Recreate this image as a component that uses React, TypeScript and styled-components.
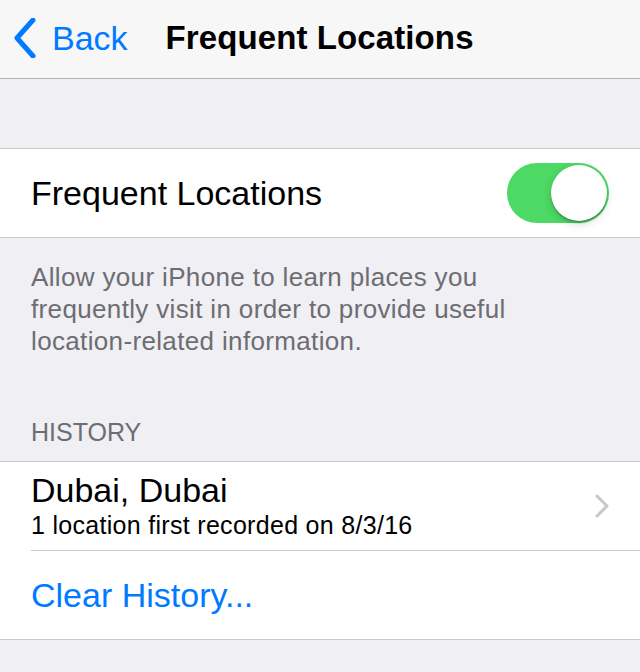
import styled, { createGlobalStyle } from 'styled-components';

const GlobalStyle = createGlobalStyle`
  html, body {
    margin: 0;
    padding: 0;
    background: #efeff4;
    font-family: "Liberation Sans", Arial, sans-serif;
    -webkit-font-smoothing: antialiased;
  }
`;

const Screen = styled.div`
  width: 640px;
  min-height: 672px;
  background: #efeff4;
`;

const NavBar = styled.header`
  height: 78px;
  display: flex;
  align-items: center;
  background: #f7f7f8;
  border-bottom: 1px solid #b2b2b2;
  box-sizing: content-box;
`;

const BackButton = styled.a`
  display: flex;
  align-items: center;
  gap: 16px;
  padding-left: 14px;
  color: #007aff;
  font-size: 34px;
  text-decoration: none;
  margin-bottom: 2px;
`;

const NavTitle = styled.h1`
  margin: 0 0 2px 38px;
  font-size: 33px;
  font-weight: 700;
  color: #000;
  letter-spacing: 0.1px;
`;

const Spacer = styled.div<{ height: number }>`
  height: ${({ height }) => height}px;
`;

const Group = styled.section`
  background: #fff;
  border-top: 1px solid #c8c7cc;
  border-bottom: 1px solid #c8c7cc;
`;

const Cell = styled.div<{ height: number; divider?: boolean }>`
  position: relative;
  height: ${({ height }) => height}px;
  padding: 0 31px;
  display: flex;
  align-items: center;
  justify-content: space-between;

  ${({ divider }) =>
    divider &&
    `
    &::after {
      content: '';
      position: absolute;
      left: 31px;
      right: 0;
      bottom: -1px;
      height: 1px;
      background: #c8c7cc;
      z-index: 1;
    }
    margin-bottom: 1px;
  `}
`;

const CellLabel = styled.span<{ tint?: string }>`
  font-size: 34px;
  color: ${({ tint }) => tint || '#000'};
`;

const CellText = styled.div`
  display: flex;
  flex-direction: column;
`;

const CellTitle = styled.span`
  font-size: 34px;
  line-height: 38px;
  color: #000;
`;

const CellSubtitle = styled.span`
  font-size: 25px;
  line-height: 32px;
  letter-spacing: 0.3px;
  color: #000;
`;

const Switch = styled.div<{ on: boolean }>`
  width: 102px;
  height: 60px;
  border-radius: 30px;
  background: ${({ on }) => (on ? '#4cd964' : '#e5e5ea')};
  display: flex;
  align-items: center;
  justify-content: ${({ on }) => (on ? 'flex-end' : 'flex-start')};
  padding: 2px;
  box-sizing: border-box;
`;

const Knob = styled.div`
  width: 56px;
  height: 56px;
  border-radius: 50%;
  background: #fff;
  box-shadow: 0 3px 8px rgba(0, 0, 0, 0.15), 0 1px 1px rgba(0, 0, 0, 0.16), 0 3px 1px rgba(0, 0, 0, 0.1);
`;

const Footer = styled.p`
  margin: 0;
  padding: 23px 31px 0;
  max-width: 525px;
  font-size: 26px;
  line-height: 32px;
  letter-spacing: 0.35px;
  color: #6d6d72;
`;

const SectionHeader = styled.h2`
  margin: 0;
  padding: 59px 31px 0;
  height: 45px;
  font-size: 25px;
  font-weight: 400;
  line-height: 32px;
  color: #6d6d72;
  text-transform: uppercase;
`;

function BackChevron() {
  return (
    <svg width="22" height="40" viewBox="0 0 22 40" fill="none">
      <path d="M19 2 L3 20 L19 38" stroke="#007aff" strokeWidth="5" strokeLinecap="round" strokeLinejoin="round" />
    </svg>
  );
}

function Disclosure() {
  return (
    <svg width="14" height="24" viewBox="0 0 14 24" fill="none">
      <path d="M2 2 L12 12 L2 22" stroke="#c7c7cc" strokeWidth="3" strokeLinecap="round" strokeLinejoin="round" />
    </svg>
  );
}

export default function App() {
  return (
    <Screen>
      <GlobalStyle />
      <NavBar>
        <BackButton href="#">
          <BackChevron />
          Back
        </BackButton>
        <NavTitle>Frequent Locations</NavTitle>
      </NavBar>

      <Spacer height={69} />

      <Group>
        <Cell height={88}>
          <CellLabel>Frequent Locations</CellLabel>
          <Switch on>
            <Knob />
          </Switch>
        </Cell>
      </Group>

      <Footer>
        Allow your iPhone to learn places you frequently visit in order to provide useful
        location-related information.
      </Footer>

      <SectionHeader>History</SectionHeader>

      <Group>
        <Cell height={88} divider>
          <CellText>
            <CellTitle>Dubai, Dubai</CellTitle>
            <CellSubtitle>1 location first recorded on 8/3/16</CellSubtitle>
          </CellText>
          <Disclosure />
        </Cell>
        <Cell height={88}>
          <CellLabel tint="#007aff">Clear History...</CellLabel>
        </Cell>
      </Group>
    </Screen>
  );
}
